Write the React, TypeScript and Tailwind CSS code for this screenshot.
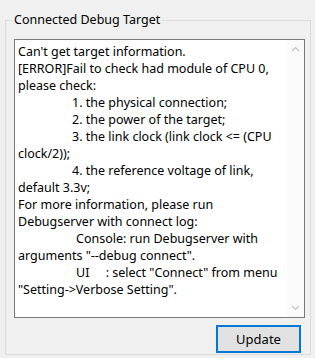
import React from "react";

const lines: { text: string; indent?: number }[] = [
  { text: "Can't get target information." },
  { text: "[ERROR]Fail to check had module of CPU 0," },
  { text: "please check:" },
  { text: "1. the physical connection;", indent: 54 },
  { text: "2. the power of the target;", indent: 54 },
  { text: "3. the link clock (link clock <= (CPU", indent: 54 },
  { text: "clock/2));" },
  { text: "4. the reference voltage of link,", indent: 54 },
  { text: "default 3.3v;" },
  { text: "For more information, please run" },
  { text: "Debugserver with connect log:" },
  { text: "Console: run Debugserver with", indent: 58 },
  { text: 'arguments "--debug connect".' },
  { text: 'UI     : select "Connect" from menu', indent: 58 },
  { text: '"Setting->Verbose Setting".' },
];

function Chevron({ down }: { down?: boolean }) {
  return (
    <svg width="9" height="6" viewBox="0 0 9 6" className={down ? "rotate-180" : ""}>
      <path d="M1 5 L4.5 1.5 L8 5" fill="none" stroke="#c2c2c2" strokeWidth="1.2" />
    </svg>
  );
}

export default function App() {
  return (
    <div
      className="h-[358px] w-[315px] bg-[#f0f0f0] pl-[5px] pr-[4px] pt-[20px] text-black"
      style={{ fontFamily: '"Noto Sans", "Open Sans", sans-serif' }}
    >
      <div className="relative h-[335px] border border-[#dcdcdc] px-[8px] pt-[18px]">
        <span className="absolute -top-[10px] left-[6px] bg-[#f0f0f0] px-[2px] text-[12.5px] leading-[18px]">
          Connected Debug Target
        </span>
        <div className="flex h-[279px] w-[291px] border border-[#7a7a7a] bg-white">
          <div className="flex-1 whitespace-pre pl-[3px] pt-[3px] text-[12.5px] leading-[17px]">
            {lines.map((l, i) => (
              <div key={i} style={l.indent ? { paddingLeft: l.indent } : undefined}>
                {l.text}
              </div>
            ))}
          </div>
          <div className="flex w-[17px] flex-col items-center justify-between bg-[#fafafa] py-[6px]">
            <Chevron />
            <Chevron down />
          </div>
        </div>
        <div className="mt-[7px] flex justify-end pr-[1px]">
          <button className="h-[28px] w-[85px] border-2 border-[#0078d7] bg-[#e1e1e1] text-[13px] leading-none">
            Update
          </button>
        </div>
      </div>
    </div>
  );
}
